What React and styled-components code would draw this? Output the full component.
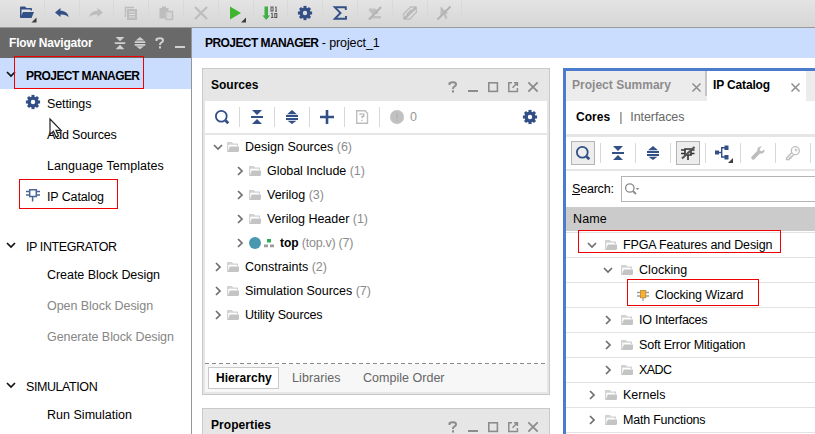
import React from 'react';
import styled, { createGlobalStyle, css } from 'styled-components';

const NAVY = '#324f86';
const GREY = '#8c8c8c';
const PALE = '#bdbdbd';

const GlobalStyle = createGlobalStyle`
  * { box-sizing: border-box; }
  body { margin: 0; background: #fff; overflow: hidden; }
`;

const Window = styled.div`
  position: relative;
  width: 815px;
  height: 434px;
  overflow: hidden;
  display: flex;
  flex-direction: column;
  background: #fff;
  color: #000;
  font: 12.5px/16px "Liberation Sans", Arial, sans-serif;
`;

const Label = styled.span`
  white-space: pre;
  color: ${(p) => p.$color || 'inherit'};
  letter-spacing: ${(p) => p.$ls || 0}px;
  ${(p) => p.$bold && css`font-weight: bold; font-size: 12px;`}
`;

/* ---------- icons ---------- */

const Svg = styled.svg`
  display: block;
  flex: none;
  overflow: visible;
`;

const Icon = ({ w = 16, h = w, children }) => (
  <Svg width={w} height={h} viewBox={`0 0 ${w} ${h}`} fill="none">{children}</Svg>
);

const Gear = ({ color = NAVY }) => (
  <Icon>
    <circle cx="8" cy="8" r="3.9" stroke={color} strokeWidth="3.4" />
    {[0, 45, 90, 135, 180, 225, 270, 315].map((a) => (
      <rect key={a} x="6.5" y="0.9" width="3" height="3" fill={color} transform={`rotate(${a} 8 8)`} />
    ))}
  </Icon>
);

const Corner = () => <path d="M19.5 14.5V19.5H14.5Z" fill="#3c3c3c" />;

const OpenFolder = () => (
  <Icon w={20}>
    <path d="M3 14V4.5Q3 3.5 4 3.5H8L9.5 5H14Q15 5 15 6V7.5H13.5V6.5H4.5V14Z" fill={NAVY} />
    <path d="M6 9H17L14.5 15H3Z" fill={NAVY} />
    <Corner />
  </Icon>
);

const Undo = ({ color = NAVY, flip }) => (
  <Icon>
    <path
      transform={flip ? 'translate(16 0) scale(-1 1)' : undefined}
      d="M1 7.5L6.5 3V5.7C11 5.7 14 8 14.8 12.3C12.5 10 10 9.3 6.5 9.5V12Z"
      fill={color}
    />
  </Icon>
);

const Copy = () => (
  <Icon>
    <path d="M2.5 12V2.5H11" stroke={PALE} strokeWidth="1.4" />
    <rect x="4" y="4" width="10" height="11" fill={PALE} />
    <path d="M6 7H12M6 9.5H12M6 12H12" stroke="#e0e0e0" />
  </Icon>
);

const Paste = () => (
  <Icon>
    <path d="M1.5 3H4V1.5H8V3H10.5V6H7V13.5H1.5Z" fill={PALE} />
    <rect x="8" y="6.5" width="6.5" height="8" fill="#d6d6d6" stroke={PALE} strokeWidth="1.4" />
  </Icon>
);

const Cross = ({ size = 16, inset = 2, color = PALE, weight = 2.2 }) => (
  <Icon w={size}>
    <path
      d={`M${inset} ${inset}L${size - inset} ${size - inset}M${size - inset} ${inset}L${inset} ${size - inset}`}
      stroke={color}
      strokeWidth={weight}
    />
  </Icon>
);

const Play = () => (
  <Icon w={20}>
    <path d="M4 3.5L15 10L4 16.5Z" fill="#41b52d" />
    <path d="M20 14.5V19.5H15Z" fill="#3c3c3c" />
  </Icon>
);

const Bitstream = () => (
  <Icon>
    <path d="M2.5 1.5H6V10.5H8L4.2 15L0.5 10.5H2.5Z" fill="#41b044" />
    <rect x="9" y="2" width="2" height="4" stroke="#555" strokeWidth="1" />
    <path d="M13 6.2H15M14.1 6V1.8L13 2.5M9 12.5H11.5M10.2 12.5V8L9 8.7" stroke="#555" />
    <rect x="12.8" y="8.5" width="2" height="4" stroke="#555" strokeWidth="1" />
  </Icon>
);

const Sigma = () => (
  <Icon>
    <path d="M13.8 5V2.3H2.8L8.5 8L2.8 13.8H14V11" stroke={NAVY} strokeWidth="1.9" />
  </Icon>
);

const PinOff = () => (
  <Icon>
    <path d="M2 3.5H8L11 6V9H5L2 6ZM4 13.5H14V11H6Z" fill="#c0c0c0" />
    <path d="M2 14.5L14 2" stroke="#b3b3b3" strokeWidth="2" />
  </Icon>
);

const LayersOff = () => (
  <Icon>
    <path d="M1.5 9L8.5 2H14L14.5 7L8 14H2ZM4.5 9.5L9.5 4.5" stroke={PALE} strokeWidth="1.3" />
    <path d="M2 14L14 2.5" stroke="#b5b5b5" strokeWidth="2.4" />
  </Icon>
);

const CursorOff = () => (
  <Icon>
    <path d="M4.5 1.5L12.5 8.5H9.5L11.5 13L9.5 14L7.5 9.5L4.5 12Z" fill={PALE} />
    <path d="M1.5 14.5L14.5 1.5" stroke="#b3b3b3" strokeWidth="2" />
  </Icon>
);

const Search = ({ color = NAVY, weight = 1.8 }) => (
  <Icon>
    <circle cx="7.3" cy="7.3" r="5.4" stroke={color} strokeWidth={weight} />
    <path d="M11.5 11.5L14.3 14.3" stroke={color} strokeWidth={weight + 0.9} />
  </Icon>
);

const Collapse = ({ color = NAVY, size = 16 }) => (
  <Svg width={size} height={size} viewBox="0 0 16 16" fill={color}>
    <path d="M3 1H13L8 6ZM2 7H14V9H2ZM3 15H13L8 10Z" />
  </Svg>
);

const Expand = ({ color = NAVY, size = 16 }) => (
  <Svg width={size} height={size} viewBox="0 0 16 16" fill={color}>
    <path d="M8 1L13 5.2H3ZM2 6H14V8H2ZM2 9H14V11H2ZM3.5 11.8H12.5L8 15Z" />
  </Svg>
);

const Plus = () => (
  <Icon><path d="M8 1V15M1 8H15" stroke={NAVY} strokeWidth="2.6" /></Icon>
);

const QuestionMark = ({ color = GREY }) => (
  <Icon w={14}>
    <g stroke={color}>
      <path d="M3.5 5V3.2Q5 2.3 7 2.3Q10 2.3 10 4.5Q10 5.9 8.2 6.7Q7 7.3 7 9" strokeWidth="2" />
      <path d="M6 11.4H8" strokeWidth="2.1" />
    </g>
  </Icon>
);

const HelpPage = () => (
  <Icon>
    <path d="M2.7 1.7H11L13.5 4.2V14.3H2.7Z" stroke={PALE} strokeWidth="1.4" />
    <path d="M6 6V5H9.8V7.3H8V9.3M7.9 10.7V12" stroke="#b0b0b0" strokeWidth="1.2" />
  </Icon>
);

const Alert = () => (
  <Icon>
    <circle cx="8" cy="8" r="7" fill="#c1c1c1" />
    <path d="M8 4V9M8 10.6V12.2" stroke="#b3b3b3" strokeWidth="1.6" />
  </Icon>
);

const Minimize = ({ color = GREY }) => (
  <Icon w={14}><path d="M2 11H12" stroke={color} strokeWidth="2" /></Icon>
);
const Maximize = () => (
  <Icon w={14}><rect x="2.8" y="2.8" width="8.6" height="8.6" stroke={GREY} strokeWidth="1.6" /></Icon>
);
const Detach = () => (
  <Icon w={14}>
    <path d="M6 2.8H2.8V11.4H11.4V8M8 2.8H11.4V6M11.4 2.8L6.5 7.7" stroke={GREY} strokeWidth="1.5" />
  </Icon>
);

const Chip = () => (
  <Icon>
    <path d="M4.7 2.7H11.3V9.5H4.7ZM1 4.5H4.5M1 8H4.5M11.5 4.5H15M11.5 8H15M7.6 10V14.5" stroke="#4a6699" strokeWidth="1.5" />
  </Icon>
);

const ChipOff = () => (
  <Icon>
    <path d="M5 4H11V10H5ZM1 5H5M1 8.5H5M11 5H14.5M11 8.5H14.5M8 10V15" stroke="#333" strokeWidth="1.6" />
    <path d="M2 13.5L14.5 2" stroke="#555" strokeWidth="2.2" />
  </Icon>
);

const Hierarchy = () => (
  <Icon w={20}>
    <path d="M2 7.5H6V11.5H2ZM11.5 2.5H15.5V7H11.5ZM11.5 12H15.5V16.5H11.5Z" fill={NAVY} />
    <path d="M6 9.5H8.5M12 4.7H8.7V14H12" stroke={NAVY} strokeWidth="1.4" />
    <path d="M20 15V20H15Z" fill="#3c3c3c" />
  </Icon>
);

const Wrench = () => (
  <Icon>
    <path
      d="M14.5 4.2L12 6.2L10 5.8L9.6 4L11.8 1.6C9.5 1 7 2.5 7.3 5.7L1.5 11.8C.5 13.5 2.5 15.5 4.2 14.4L10 8.6C13 9 15 7 14.5 4.2Z"
      fill={PALE}
    />
  </Icon>
);

const Key = () => (
  <Icon>
    <circle cx="10.3" cy="5.7" r="4" stroke={PALE} strokeWidth="1.3" />
    <circle cx="11" cy="5" r="1" stroke={PALE} />
    <path d="M7 7.5L1.5 13V14.7H4.2V13H6V11.3H7.3L9 9.3" stroke={PALE} strokeWidth="1.3" />
  </Icon>
);

const Chevron = ({ open, color = '#6e6e6e' }) => (
  <Icon w={12}>
    <path d={open ? 'M2 4L6 8L10 4' : 'M4 2L8 6L4 10'} stroke={color} strokeWidth="1.7" />
  </Icon>
);

const Folder = () => (
  <Icon w={12}>
    <path d="M0 11V1H5L6 2.5H11V5H9.8V3.7H1.3V11Z" fill="#d2d2d2" />
    <path d="M2.8 5.6H12V10L11.2 11H0.8Z" fill="#c4c4c4" />
  </Icon>
);

const ModuleMark = () => (
  <Icon w={26} h={12}>
    <circle cx="6" cy="6" r="6" fill="#4a98b0" />
    <path d="M18 2H22V5.5H18Z" fill="#2fae57" />
    <path d="M15 7.5H19V10.3H15ZM21 7.5H25V10.3H21Z" fill="#9c9c9c" />
  </Icon>
);

const WizardChip = () => (
  <Icon w={12}>
    <path d="M0 3.5H12M0 7H12M6 9V12" stroke="#9d9d9d" strokeWidth="1.3" />
    <rect x="3.4" y="1.4" width="5.4" height="7.4" fill="#f9b031" stroke="#b98a3c" strokeWidth="0.8" />
  </Icon>
);

/* ---------- main toolbar ---------- */

const Toolbar = styled.div`
  flex: none;
  height: 28px;
  display: flex;
  padding-left: 10px;
  border-bottom: 1px solid #9a9a9a;
  background: linear-gradient(#e4e4e4, #d6d6d6);
`;

const ToolSlot = styled.div`
  flex: none;
  width: 34.8px;
  display: flex;
  align-items: center;
  justify-content: center;
  border-right: 1px solid #d9d9d9;
  padding-bottom: 1px;
`;

/* ---------- flow navigator ---------- */

const Body = styled.div`
  flex: 1;
  min-height: 0;
  display: flex;
`;

const Navigator = styled.nav`
  flex: none;
  width: 192px;
  border-right: 1px solid #969696;
  overflow: hidden;
`;

const NavTitle = styled.div`
  height: 30px;
  display: flex;
  align-items: center;
  padding-left: 9px;
  background: #696969;
  color: #fff;
`;

const NavTools = styled.div`
  margin-left: auto;
  display: flex;
  align-items: center;
  gap: 6px;
  padding-right: 4px;
`;

const NavSection = styled.div`
  height: ${(p) => (p.$active ? 31 : 28)}px;
  margin-top: ${(p) => (p.$active ? 0 : 19)}px;
  display: flex;
  align-items: center;
  gap: 9px;
  padding: ${(p) => (p.$active ? 4 : 2)}px 0 0 5px;
  background: ${(p) => (p.$active ? '#cbddff' : 'transparent')};

  svg { position: relative; top: -2px; }
`;

const NavItem = styled.div`
  height: 31px;
  display: flex;
  align-items: center;
  padding-left: 25px;
  padding-bottom: 1px;
  color: ${(p) => (p.$disabled ? '#868686' : '#000')};
`;

const NavIcon = styled.span`
  width: 22px;
  height: 20px;
`;

/* ---------- panels ---------- */

const Main = styled.main`
  flex: 1;
  min-width: 0;
  display: flex;
  flex-direction: column;
`;

const Breadcrumb = styled.div`
  flex: none;
  height: 30px;
  display: flex;
  align-items: center;
  padding-left: 13px;
  background: #cbddff;
`;

const Workspace = styled.div`
  flex: 1;
  min-height: 0;
  display: flex;
  gap: 13px;
  padding: 10px 0 0 10px;
`;

const Column = styled.div`
  flex: none;
  width: 348px;
  display: flex;
  flex-direction: column;
  gap: 13px;
`;

const Panel = styled.section`
  flex: none;
  height: ${(p) => p.$h}px;
  display: flex;
  flex-direction: column;
  padding: 0 2px 2px;
  border: 1px solid #c9c9c9;
  background: #e6e6e6;
`;

const PanelTitle = styled.div`
  flex: none;
  height: 32px;
  display: flex;
  align-items: center;
  padding-left: 6px;
`;

const PanelTools = styled.div`
  margin-left: auto;
  display: flex;
  gap: 6px;
  padding: 4px 7px 0 0;
`;

const IconBar = styled.div`
  flex: none;
  height: ${(p) => p.$h}px;
  display: flex;
  align-items: center;
  background: #fff;
  border-bottom: 2px solid #e6e6e6;
`;

const IconSlot = styled.div`
  flex: none;
  width: 35px;
  height: 20px;
  display: flex;
  align-items: center;
  justify-content: center;
  border-right: 1px solid #d8d8d8;
`;

const Toggle = styled.div`
  flex: none;
  width: 24px;
  height: 24px;
  display: flex;
  align-items: center;
  justify-content: center;
  border: 1px solid #b4b4b4;
  background: #ededed;
`;

const Counter = styled.div`
  display: flex;
  align-items: center;
  gap: 5px;
  padding-left: 9px;
`;

const BarEnd = styled.div`
  margin-left: auto;
  padding-right: 9px;
`;

const Tree = styled.div`
  flex: 1;
  min-height: 0;
  background: #fff;
`;

const TreeRow = styled.div`
  height: 24px;
  display: flex;
  align-items: center;
  padding-left: ${(p) => 7 + p.$depth * 22}px;
`;

const Glyph = styled.span`
  margin: 0 ${(p) => p.$gap || 6}px 0 ${(p) => p.$before || 3}px;
`;

const Dashes = styled.div`
  flex: none;
  height: 1px;
  background: repeating-linear-gradient(90deg, #8a8a8a 0 4px, #fff 4px 7px);
`;

const BottomTabs = styled.div`
  flex: none;
  height: 28px;
  display: flex;
  align-items: flex-start;
  padding: 3px 0 0 3px;
  background: #f7f7f7;
`;

const BottomTab = styled.div`
  height: 22px;
  display: flex;
  align-items: center;
  padding: 0 7px;
  margin-right: 5px;
  border: 1px solid ${(p) => (p.$active ? '#c9c9c9' : 'transparent')};
  background: ${(p) => (p.$active ? '#fff' : 'transparent')};
  width: ${(p) => p.$w}px;
`;

/* ---------- catalog ---------- */

const Catalog = styled.section`
  flex: 1;
  min-width: 0;
  overflow: hidden;
  border: solid #4a7bcd;
  border-width: 3px 0 0 3px;
  background: #fff;
`;

const TabStrip = styled.div`
  height: 30px;
  display: flex;
  background: #ececec;
`;

const DocTab = styled.div`
  width: ${(p) => p.$w}px;
  display: flex;
  align-items: center;
  justify-content: space-between;
  padding: 0 ${(p) => (p.$active ? 5 : 3)}px 3px 6px;
  background: ${(p) => (p.$active ? '#fff' : 'transparent')};

  svg { position: relative; top: 3px; }
`;

const TabDivider = styled.div`
  width: 2px;
  height: 25px;
  background: #c6c6c6;
`;

const ModeBar = styled.div`
  height: 36px;
  display: flex;
  align-items: center;
  padding: 0 0 2px 10px;
  gap: 9px;
  border-bottom: 3px solid #e6e6e6;
`;

const Bar = styled(Label)`
  width: 3px;
  margin-right: -1px;
`;

const SearchRow = styled.div`
  height: 36px;
  display: flex;
  align-items: center;
  padding-left: 6px;
`;

const SearchLabel = styled.label`
  width: 49px;
`;

const SearchBox = styled.div`
  flex: 1;
  height: 26px;
  display: flex;
  align-items: center;
  padding-left: 2px;
  border: 1px solid #b4b4b4;
  border-right: 0;
`;

const ColumnHead = styled.div`
  height: 24px;
  display: flex;
  align-items: center;
  padding-left: 7px;
  background: #cbcbcb;
`;

const CatalogRows = styled.div`
  margin-top: 1px;
  border-top: 1px solid #e2e2e2;
`;

const CatalogRow = styled.div`
  height: 25px;
  display: flex;
  align-items: center;
  padding-left: ${(p) => 20 + p.$depth * 16}px;
  border-bottom: 1px solid #e2e2e2;
`;

/* ---------- overlays ---------- */

const Highlight = styled.div`
  position: absolute;
  left: ${(p) => p.$x}px;
  top: ${(p) => p.$y}px;
  width: ${(p) => p.$w}px;
  height: ${(p) => p.$h}px;
  border: 1px solid #f00000;
`;

const Pointer = styled.div`
  position: absolute;
  left: 49px;
  top: 118px;
`;

const navItems = {
  manager: [
    { t: 'Settings', ls: -0.1, icon: <Gear /> },
    { t: 'Add Sources', ls: -0.18 },
    { t: 'Language Templates', ls: 0.06 },
    { t: 'IP Catalog', ls: -0.12, icon: <Chip /> },
  ],
  integrator: [
    { t: 'Create Block Design', ls: -0.05 },
    { t: 'Open Block Design', ls: -0.05, disabled: true },
    { t: 'Generate Block Design', ls: -0.08, disabled: true },
  ],
  simulation: [{ t: 'Run Simulation', ls: 0.02 }],
};

const NavList = ({ items }) => items.map((i) => (
  <NavItem key={i.t} $disabled={i.disabled}>
    <NavIcon>{i.icon}</NavIcon>
    <Label $ls={i.ls}>{i.t}</Label>
  </NavItem>
));

const sources = [
  { t: 'Design Sources', n: ' (6)', d: 0, open: true },
  { t: 'Global Include', n: ' (1)', d: 1, ls: -0.05 },
  { t: 'Verilog', n: ' (3)', d: 1 },
  { t: 'Verilog Header', n: ' (1)', d: 1, ls: -0.03 },
  { t: 'top', n: ' (top.v) (7)', d: 1, top: true, nls: -0.27 },
  { t: 'Constraints', n: ' (2)', d: 0 },
  { t: 'Simulation Sources', n: ' (7)', d: 0, ls: -0.03 },
  { t: 'Utility Sources', d: 0, ls: -0.17 },
];

const cores = [
  { t: 'FPGA Features and Design', d: 0, open: true, ls: -0.15 },
  { t: 'Clocking', d: 1, open: true, ls: 0.05 },
  { t: 'Clocking Wizard', d: 2, leaf: true, ls: -0.13 },
  { t: 'IO Interfaces', d: 1, ls: -0.25 },
  { t: 'Soft Error Mitigation', d: 1, ls: -0.2 },
  { t: 'XADC', d: 1, ls: -0.6 },
  { t: 'Kernels', d: 0 },
  { t: 'Math Functions', d: 0, ls: -0.22 },
];

const WindowButtons = () => (
  <PanelTools>
    <QuestionMark />
    <Minimize />
    <Maximize />
    <Detach />
    <Cross size={14} inset={2.3} color={GREY} weight={1.8} />
  </PanelTools>
);

const tools = [
  <OpenFolder />, <Undo />, <Undo color={PALE} flip />, <Copy />, <Paste />, <Cross />,
  <Play />, <Bitstream />, <Gear />, <Sigma />, <PinOff />, <LayersOff />, <CursorOff />,
];

export default function App() {
  return (
    <Window>
      <GlobalStyle />
      <Toolbar>
        {tools.map((icon, i) => <ToolSlot key={i}>{icon}</ToolSlot>)}
      </Toolbar>

      <Body>
        <Navigator>
          <NavTitle>
            <Label $bold $ls={-0.18}>Flow Navigator</Label>
            <NavTools>
              <Collapse color="#d0d0d0" size={14} />
              <Expand color="#d0d0d0" size={14} />
              <QuestionMark color="#d0d0d0" />
              <Minimize color="#d0d0d0" />
            </NavTools>
          </NavTitle>
          <NavSection $active>
            <Chevron open color="#111" />
            <Label $bold $ls={-0.57}>PROJECT MANAGER</Label>
          </NavSection>
          <NavList items={navItems.manager} />
          <NavSection>
            <Chevron open color="#111" />
            <Label $ls={-0.4}>IP INTEGRATOR</Label>
          </NavSection>
          <NavList items={navItems.integrator} />
          <NavSection>
            <Chevron open color="#111" />
            <Label $ls={-0.42}>SIMULATION</Label>
          </NavSection>
          <NavList items={navItems.simulation} />
        </Navigator>

        <Main>
          <Breadcrumb>
            <Label $bold $ls={-0.57}>PROJECT MANAGER</Label>
            <Label $ls={-0.12}> - project_1</Label>
          </Breadcrumb>
          <Workspace>
            <Column>
              <Panel $h={327}>
                <PanelTitle>
                  <Label $bold>Sources</Label>
                  <WindowButtons />
                </PanelTitle>
                <IconBar $h={34}>
                  <IconSlot><Search /></IconSlot>
                  <IconSlot><Collapse /></IconSlot>
                  <IconSlot><Expand /></IconSlot>
                  <IconSlot><Plus /></IconSlot>
                  <IconSlot><HelpPage /></IconSlot>
                  <Counter><Alert /><Label $color="#969696">0</Label></Counter>
                  <BarEnd><Gear /></BarEnd>
                </IconBar>
                <Tree>
                  {sources.map((r) => (
                    <TreeRow key={r.t} $depth={r.d}>
                      <Chevron open={r.open} />
                      <Glyph $gap={r.top ? 5 : 6}>{r.top ? <ModuleMark /> : <Folder />}</Glyph>
                      <Label $bold={r.top} $ls={r.ls}>{r.t}</Label>
                      <Label $color={GREY} $ls={r.nls}>{r.n}</Label>
                    </TreeRow>
                  ))}
                </Tree>
                <Dashes />
                <BottomTabs>
                  <BottomTab $active $w={71}><Label $bold $ls={0.05}>Hierarchy</Label></BottomTab>
                  <BottomTab $w={66}><Label $color="#666" $ls={0.08}>Libraries</Label></BottomTab>
                  <BottomTab><Label $color="#666" $ls={0.02}>Compile Order</Label></BottomTab>
                </BottomTabs>
              </Panel>
              <Panel $h={120}>
                <PanelTitle>
                  <Label $bold $ls={0.07}>Properties</Label>
                  <WindowButtons />
                </PanelTitle>
              </Panel>
            </Column>

            <Catalog>
              <TabStrip>
                <DocTab $w={139}>
                  <Label $bold $color={GREY} $ls={0.02}>Project Summary</Label>
                  <Cross size={11} inset={1.5} color={GREY} weight={1.5} />
                </DocTab>
                <TabDivider />
                <DocTab $w={99} $active>
                  <Label $bold $ls={-0.15}>IP Catalog</Label>
                  <Cross size={11} inset={1.5} color={GREY} weight={1.5} />
                </DocTab>
              </TabStrip>
              <ModeBar>
                <Label $bold $ls={0.05}>Cores</Label>
                <Bar $color="#666">|</Bar>
                <Label $color="#666" $ls={-0.08}>Interfaces</Label>
              </ModeBar>
              <IconBar $h={34}>
                <IconSlot><Toggle><Search /></Toggle></IconSlot>
                <IconSlot><Collapse /></IconSlot>
                <IconSlot><Expand /></IconSlot>
                <IconSlot><Toggle><ChipOff /></Toggle></IconSlot>
                <IconSlot><Hierarchy /></IconSlot>
                <IconSlot><Wrench /></IconSlot>
                <IconSlot><Key /></IconSlot>
              </IconBar>
              <SearchRow>
                <SearchLabel><Label $ls={-0.2}><u>S</u>earch:</Label></SearchLabel>
                <SearchBox>
                  <Svg width="18" height="16" viewBox="0 0 18 16" fill="none">
                    <circle cx="5.8" cy="7" r="4.2" stroke="#8c8c8c" strokeWidth="1.3" />
                    <path d="M8.8 10L12 13" stroke="#8c8c8c" strokeWidth="1.8" />
                    <path d="M11.5 7H15.5L13.5 9Z" fill="#8c8c8c" />
                  </Svg>
                </SearchBox>
              </SearchRow>
              <ColumnHead><Label $ls={0.15}>Name</Label></ColumnHead>
              <CatalogRows>
                {cores.map((r) => (
                  <CatalogRow key={r.t} $depth={r.d}>
                    {r.leaf ? null : <Chevron open={r.open} />}
                    <Glyph $before={r.leaf ? 19 : 7}>{r.leaf ? <WizardChip /> : <Folder />}</Glyph>
                    <Label $ls={r.ls}>{r.t}</Label>
                  </CatalogRow>
                ))}
              </CatalogRows>
            </Catalog>
          </Workspace>
        </Main>
      </Body>

      <Highlight $x={14} $y={56} $w={130} $h={33} />
      <Highlight $x={19} $y={179} $w={99} $h={30} />
      <Highlight $x={578} $y={230} $w={203} $h={23} />
      <Highlight $x={627} $y={279} $w={132} $h={27} />
      <Pointer>
        <Icon w={14} h={21}>
          <path d="M1 1V16.5L4.5 13.3L7 19L9.5 18L7 12.3H12Z" fill="#fff" stroke="#222" strokeWidth="1.2" />
        </Icon>
      </Pointer>
    </Window>
  );
}
